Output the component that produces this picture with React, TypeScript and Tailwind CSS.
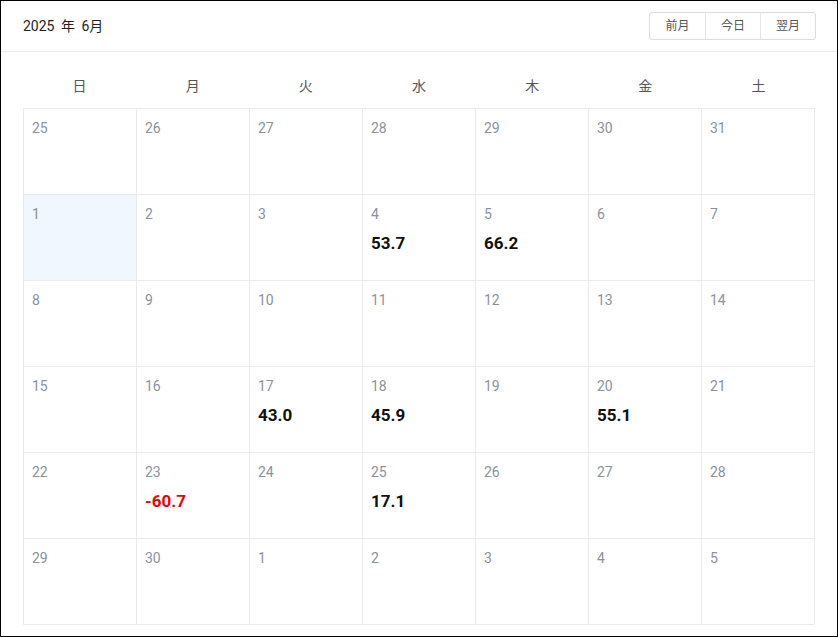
import React from "react";

type Cell = { day: number; value?: string; neg?: boolean; today?: boolean };

const weekDays = ["日", "月", "火", "水", "木", "金", "土"];

// 2025年6月 (前後月の日付を含む 6週)
const rows: Cell[][] = [
  [25, 26, 27, 28, 29, 30, 31].map((d) => ({ day: d })),
  [
    { day: 1, today: true },
    { day: 2 },
    { day: 3 },
    { day: 4, value: "53.7" },
    { day: 5, value: "66.2" },
    { day: 6 },
    { day: 7 },
  ],
  [8, 9, 10, 11, 12, 13, 14].map((d) => ({ day: d })),
  [
    { day: 15 },
    { day: 16 },
    { day: 17, value: "43.0" },
    { day: 18, value: "45.9" },
    { day: 19 },
    { day: 20, value: "55.1" },
    { day: 21 },
  ],
  [
    { day: 22 },
    { day: 23, value: "-60.7", neg: true },
    { day: 24 },
    { day: 25, value: "17.1" },
    { day: 26 },
    { day: 27 },
    { day: 28 },
  ],
  [29, 30, 1, 2, 3, 4, 5].map((d) => ({ day: d })),
];

const font = {
  fontFamily: '"Roboto", "Noto Sans CJK JP", sans-serif',
};

export default function App() {
  return (
    <div
      className="w-[838px] h-[637px] border border-black bg-white flex flex-col"
      style={font}
    >
      {/* Header */}
      <div className="h-[51px] flex items-center justify-between pl-[22px] pr-[21px] border-b border-[#ececec] shrink-0">
        <div className="text-[14px] text-[#222] [word-spacing:3px]">2025 年 6月</div>
        <div className="-mt-px flex border border-[#dcdcdc] rounded-[3px] h-[28px] text-[12px] text-[#555]">
          <button className="w-[55px] flex items-center justify-center">前月</button>
          <button className="w-[55px] flex items-center justify-center border-l border-[#e4e4e4]">
            今日
          </button>
          <button className="w-[55px] flex items-center justify-center border-l border-[#e4e4e4]">
            翌月
          </button>
        </div>
      </div>

      {/* Body */}
      <div className="px-[22px] pt-[14px]">
        <div className="grid grid-cols-7 h-[40px] items-center text-[14px] text-[#555] mb-[2px]">
          {weekDays.map((w) => (
            <div key={w} className="text-center">
              {w}
            </div>
          ))}
        </div>

        <div className="grid grid-cols-7 border-t border-l border-[#ebebeb]">
          {rows.flat().map((c, i) => (
            <div
              key={i}
              className={`h-[86px] border-r border-b border-[#ebebeb] pl-[8px] pt-[10px] ${
                c.today ? "bg-[#f0f7fe]" : ""
              }`}
            >
              <div className="text-[14px] leading-[18px] text-[#8a929c]">{c.day}</div>
              {c.value && (
                <div
                  className={`mt-[10px] text-[17px] leading-[20px] font-bold ${
                    c.neg ? "text-[#f00000]" : "text-[#111]"
                  }`}
                >
                  {c.value}
                </div>
              )}
            </div>
          ))}
        </div>
      </div>
    </div>
  );
}
